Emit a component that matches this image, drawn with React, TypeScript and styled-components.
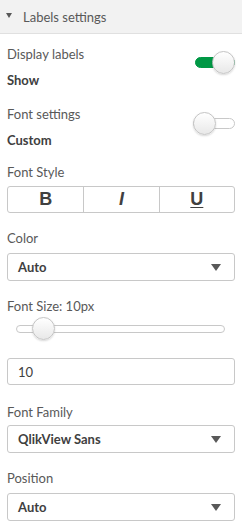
import React from "react";
import styled, { createGlobalStyle } from "styled-components";

const GlobalStyle = createGlobalStyle`
    body {
        margin: 0;
        background: #ffffff;
        font-family: Lato, "Open Sans", sans-serif;
        color: #595959;
    }
`;

const Panel = styled.div`
    width: 242px;
    background: #ffffff;
`;

const Header = styled.div`
    height: 33px;
    background: #f2f2f2;
    border-bottom: 1px solid #e0e0e0;
    display: flex;
    align-items: center;
    padding-left: 6px;
    font-size: 13px;
    color: #595959;
`;

const Caret = styled.span`
    width: 0;
    height: 0;
    border-left: 3px solid transparent;
    border-right: 3px solid transparent;
    border-top: 5px solid #595959;
    margin-right: 11px;
    margin-top: -2px;
`;

const Body = styled.div`
    padding: 10px 7px 8px 7px;
    display: flex;
    flex-direction: column;
`;

const SwitchRow = styled.div<{ spacing?: number }>`
    display: flex;
    justify-content: space-between;
    align-items: flex-start;
    margin-bottom: ${p => p.spacing ?? 14}px;
`;

const SwitchText = styled.div`
    display: flex;
    flex-direction: column;
    gap: 6px;
`;

const Label = styled.div`
    font-size: 13px;
    line-height: 20px;
    color: #595959;
`;

const Value = styled.div`
    font-size: 13px;
    line-height: 20px;
    font-weight: bold;
    color: #404040;
`;

const Switch = styled.div<{ on?: boolean }>`
    position: relative;
    width: 42px;
    height: 23px;
    margin-top: ${p => (p.on ? "7px" : "8px")};
    flex-shrink: 0;
`;

const Track = styled.div<{ on?: boolean }>`
    position: absolute;
    left: ${p => (p.on ? "2px" : "0")};
    right: 0;
    top: 6px;
    height: 11px;
    border-radius: 6px;
    box-sizing: border-box;
    background: ${p => (p.on ? "#009845" : "#ffffff")};
    border: 1px solid ${p => (p.on ? "#009845" : "#c8c8c8")};
`;

const Knob = styled.div<{ on?: boolean }>`
    position: absolute;
    top: 0;
    ${p => (p.on ? "right: 0;" : "left: 0;")}
    width: 23px;
    height: 23px;
    box-sizing: border-box;
    border-radius: 50%;
    border: 1px solid #c4c4c4;
    background: linear-gradient(#ffffff, #e8e8e8);
    box-shadow: 0 1px 2px rgba(0, 0, 0, 0.15);
`;

const Field = styled.div<{ gap?: number; spacing?: number }>`
    display: flex;
    flex-direction: column;
    gap: ${p => p.gap ?? 4}px;
    margin-bottom: ${p => p.spacing ?? 15}px;
`;

const ButtonGroup = styled.div`
    display: grid;
    grid-template-columns: 1fr 1fr 1fr;
    height: 27px;
    box-sizing: border-box;
    border: 1px solid #c8c8c8;
    border-radius: 3px;
    overflow: hidden;
`;

const StyleButton = styled.div<{ kind: "b" | "i" | "u" }>`
    display: flex;
    align-items: center;
    justify-content: center;
    font-family: "Liberation Sans", Arial, sans-serif;
    font-size: 18px;
    font-weight: bold;
    color: #404040;
    font-style: ${p => (p.kind === "i" ? "italic" : "normal")};
    text-decoration: ${p => (p.kind === "u" ? "underline" : "none")};
    text-underline-offset: 2px;
    & + & {
        border-left: 1px solid #c8c8c8;
    }
`;

const Select = styled.div`
    height: 28px;
    box-sizing: border-box;
    border: 1px solid #c8c8c8;
    border-radius: 3px;
    display: flex;
    align-items: center;
    justify-content: space-between;
    padding: 0 13px 0 10px;
    font-size: 13px;
    font-weight: bold;
    color: #404040;
`;

const Arrow = styled.span`
    width: 0;
    height: 0;
    border-left: 5px solid transparent;
    border-right: 5px solid transparent;
    border-top: 7px solid #595959;
`;

const Slider = styled.div`
    position: relative;
    height: 23px;
    margin: 0 10px 0 9px;
    display: flex;
    align-items: center;
`;

const SliderTrack = styled.div`
    width: 100%;
    height: 8px;
    box-sizing: border-box;
    border: 1px solid #c8c8c8;
    border-radius: 4px;
    background: #ffffff;
`;

const SliderKnob = styled(Knob)`
    top: 0;
`;

const Input = styled.div`
    height: 27px;
    box-sizing: border-box;
    border: 1px solid #c8c8c8;
    border-radius: 3px;
    display: flex;
    align-items: center;
    padding-left: 10px;
    font-size: 13px;
    color: #404040;
    margin-top: 18px;
    margin-bottom: 17px;
`;

function Toggle({ on }: { on?: boolean }) {
    return (
        <Switch on={on}>
            <Track on={on} />
            <Knob on={on} />
        </Switch>
    );
}

export default function App() {
    return (
        <Panel>
            <GlobalStyle />
            <Header>
                <Caret />
                Labels settings
            </Header>
            <Body>
                <SwitchRow>
                    <SwitchText>
                        <Label>Display labels</Label>
                        <Value>Show</Value>
                    </SwitchText>
                    <Toggle on />
                </SwitchRow>
                <SwitchRow spacing={12}>
                    <SwitchText>
                        <Label>Font settings</Label>
                        <Value>Custom</Value>
                    </SwitchText>
                    <Toggle />
                </SwitchRow>
                <Field>
                    <Label>Font Style</Label>
                    <ButtonGroup>
                        <StyleButton kind="b">B</StyleButton>
                        <StyleButton kind="i">I</StyleButton>
                        <StyleButton kind="u">U</StyleButton>
                    </ButtonGroup>
                </Field>
                <Field gap={5}>
                    <Label>Color</Label>
                    <Select>
                        Auto
                        <Arrow />
                    </Select>
                </Field>
                <Field gap={1} spacing={0}>
                    <Label>Font Size: 10px</Label>
                    <Slider>
                        <SliderTrack />
                        <SliderKnob style={{ left: `${((10 - 5) / (300 - 5)) * 100 + 6}%` }} />
                    </Slider>
                </Field>
                <Input>10</Input>
                <Field gap={3}>
                    <Label>Font Family</Label>
                    <Select>
                        QlikView Sans
                        <Arrow />
                    </Select>
                </Field>
                <Field gap={5}>
                    <Label>Position</Label>
                    <Select>
                        Auto
                        <Arrow />
                    </Select>
                </Field>
            </Body>
        </Panel>
    );
}
